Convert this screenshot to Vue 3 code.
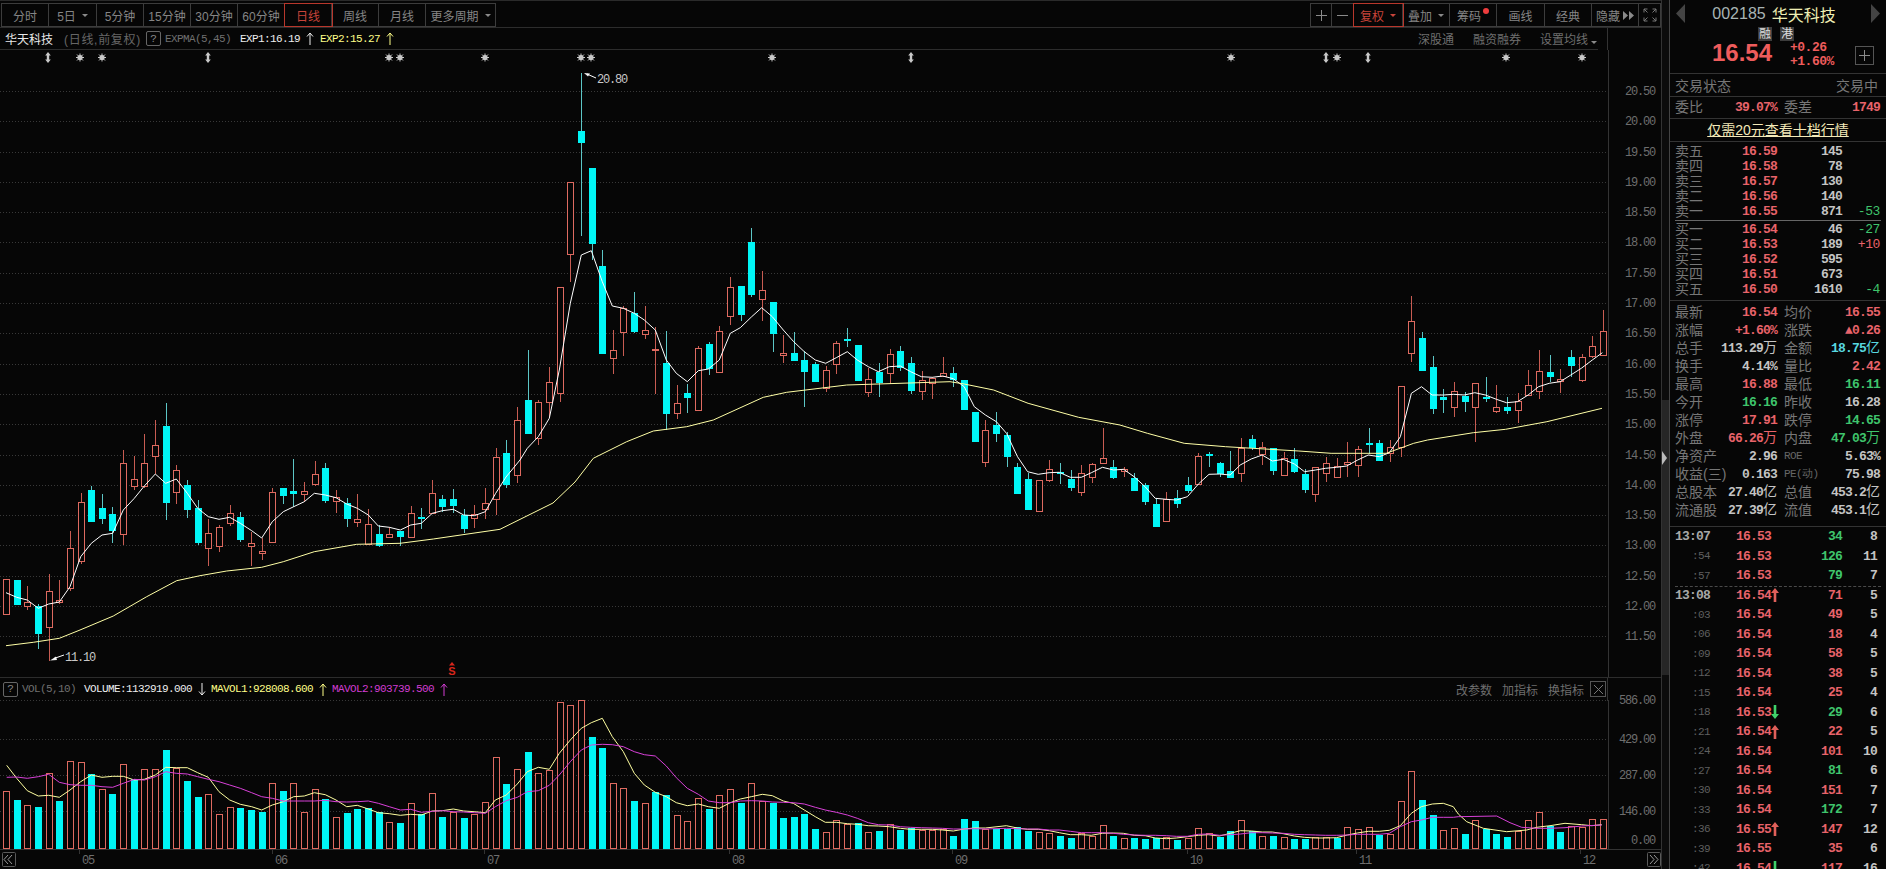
<script setup>
import { computed } from 'vue'

const leftTabs = [
  { t: '分时', w: 47 }, { t: '5日', w: 48, caret: true }, { t: '5分钟', w: 47 }, { t: '15分钟', w: 47 },
  { t: '30分钟', w: 47 }, { t: '60分钟', w: 47 }, { t: '日线', w: 47, on: true }, { t: '周线', w: 47 },
  { t: '月线', w: 47 }, { t: '更多周期', w: 70, caret: true }
]
const rightTabs = [
  { t: '复权', w: 49, caret: true, on: true }, { t: '叠加', w: 47, caret: true }, { t: '筹码', w: 47, dot: true },
  { t: '画线', w: 48 }, { t: '经典', w: 47 }
]

// candle: type, body top, body bottom, high, low - read off the crops, y = offset + v / 3
const c0 = [['r',538,641,538,645],['c',540,612,540,614],['r',607,617,558,630],['c',618,698,612,747],['r',574,680,522,782],['r',601,607,540,612],['r',445,563,392,572],['r',307,484,280,492],['c',270,363,258,365],['c',324,353,282,372],['c',342,390,322,430],['r',190,403,150,435],['r',238,258,168,270],['r',190,257,103,265],['r',136,167,60,222],['c',78,305,10,360],['r',211,275,195,312],['c',255,326,240,354],['c',325,425,300,436],['r',400,443,358,498],['r',380,437,376,455],['r',340,368,316,377],['c',351,417,337,425],['r',430,437,395,497],['r',454,458,414,480],['r',277,425,265,425],['c',265,285,263,312],['c',273,278,178,320],['r',274,281,247,306],['r',223,252,183,257],['c',205,299,190,308],['r',290,302,270,340],['c',308,353,295,380],['r',358,365,283,380],['r',373,432,327,435],['c',403,435,375,440],['r',401,410,382,415],['c',394,408,392,437],['r',340,410,318,415],['c',351,353,325,387],['r',280,340,240,342],['c',298,318,286,335],['c',298,315,268,338],['c',345,383,326,398],['r',341,355,316,385],['r',310,327,264,357],['r',172,297,145,345]]
const c1 = [['c',1180,1272,1140,1284],['r',1080,1245,1040,1270],['c',1020,1118,870,1120],['r',1027,1133,1020,1155],['r',965,1027,920,1075],['r',680,1000,680,1027],['r',365,583,365,665],['c',213,245,40,527],['c',325,548,325,600],['c',618,878,570,880],['r',871,893,810,942],['r',743,815,738,888],['c',760,812,697,820],['r',811,821,738,837],['r',866,869,800,1002],['c',908,1058,813,1110],['r',1030,1058,975,1077],['c',1000,1010,972,1058],['r',865,1050,857,1052],['c',853,923,847,945],['r',813,936,798,938],['r',680,767,652,795],['c',678,762,678,783],['c',546,702,503,710],['r',691,718,633,782],['c',727,818,727,876],['r',880,884,825,908],['c',880,899,817,900],['c',901,933,873,1040],['c',912,963,905,965],['r',931,983,918,995],['r',850,911,843,942],['c',837,839,805,860],['c',856,960,855,963],['r',958,995,925,1010],['c',935,965,910,1012],['r',883,940,868,972],['c',873,920,858,932],['c',910,990,892,1003],['r',960,992,933,1020],['r',955,970,950,1017],['r',940,947,890,950]]
const c2 = [['c',280,296,260,320],['c',300,387,300,390],['c',396,484,396,486],['r',451,545,420,560],['c',436,459,397,485],['c',465,528,455,560],['c',561,638,550,640],['c',597,687,580,690],['r',600,693,600,697],['r',568,599,541,605],['c',575,578,549,612],['c',597,622,571,632],['r',578,635,555,648],['r',553,590,550,608],['r',533,550,445,552],['c',561,592,540,597],['r',568,572,562,590],['c',594,630,580,632],['c',614,662,610,675],['c',672,738,655,742],['r',657,722,636,725],['c',655,668,630,684],['c',615,630,590,638],['r',529,611,520,614],['c',522,525,517,562],['c',549,580,545,590],['c',572,590,512,592],['r',504,580,475,606],['c',477,501,466,510],['r',500,522,487,556],['c',505,570,503,584],['r',534,584,516,586],['c',538,573,505,580],['c',583,627,566,640],['r',562,643,560,665],['r',550,580,530,606],['r',557,592,535,595],['r',546,552,486,590],['r',508,554,498,590],['c',489,491,445,523],['c',489,540,480,542],['r',502,519,480,545],['r',319,500,317,530],['r',124,218,48,245],['c',175,269,155,270],['c',262,383,228,402],['c',350,356,327,398],['r',334,382,307,410],['c',348,362,335,396],['r',310,380,310,485],['c',350,352,290,366],['r',382,393,315,398],['c',381,389,350,402],['r',362,391,340,428],['r',314,344,270,346],['r',274,332,210,356],['c',277,287,225,306],['r',298,302,267,338],['c',232,255,210,290],['r',232,300,222,305],['r',199,229,168,235],['r',154,224,90,226]]

const cx = (i) => Math.round(6 + 10.646 * i)
const toCandle = (off) => (r) => ({ up: r[0] === 'r', top: off + r[1] / 3, bot: off + r[2] / 3, hi: off + r[3] / 3, lo: off + r[4] / 3 })
const candles = computed(() =>
  [...c0.map(toCandle(400)), ...c1.map(toCandle(60)), ...c2.map(toCandle(280))].map((c, i) => ({
    ...c,
    x: cx(i),
    top: Math.round(c.top),
    bot: Math.max(Math.round(c.bot), Math.round(c.top) + 1),
    hi: Math.round(c.hi),
    lo: Math.round(c.lo)
  }))
)

const volSeg = (types, tops, off) => tops.map((v, i) => ({ up: types[i] === 'r', y: Math.round(off + v / 3) }))
const vols = [
  ...volSeg('rcrcrcrrcrcrcrrcrccrrrcccrcrrrcrccccrcrcrcrcrrr', [394,420,436,441,340,423,304,307,342,388,402,313,358,328,328,270,323,363,411,403,463,442,444,450,456,370,393,370,457,388,418,472,459,447,445,457,487,489,430,463,400,471,455,474,463,427,292], 660),
  ...volSeg('crcrrrrrccrrcrccrrrcrrcrrcccccrrrcrcrccrrrcccrc', [312,268,216,280,271,67,76,61,171,204,310,325,363,370,336,345,406,424,355,387,346,328,368,310,362,368,414,411,402,447,457,421,431,430,457,453,433,450,445,450,450,446,468,417,423,447,447], 680),
  ...volSeg('cccrrccrrrcrcccrcrrrccrcrcrccrrcrrrcrrrccrrcrcc', [446,440,453,457,460,468,474,460,468,436,468,475,473,476,475,470,480,474,445,458,471,454,421,452,469,468,472,477,477,470,472,475,440,448,440,465,463,364,274,360,405,451,445,462,421,448,462], 680),
  ...volSeg('crrrccrrrr', [530,513,481,457,497,515,497,500,478,478], 660)
].map((v, i) => ({ ...v, x: cx(i) }))

const pts = (list, x0, y0, sx = 3) => list.map(([x, y]) => `${(x0 + x / sx).toFixed(1)},${(y0 + y / 3).toFixed(1)}`).join(' ')

const ma5 = [
  pts([[18,578],[50,592],[82,600],[115,625],[146,612],[178,606],[210,560],[242,470],[274,430],[306,405],[338,400],[370,330],[403,295],[433,258],[466,222],[497,250],[529,237],[562,280],[593,325],[625,350],[657,358],[689,352],[721,370],[755,392],[785,414],[817,365],[850,335],[881,320],[913,305],[943,280],[976,285],[1008,293],[1040,312],[1072,325],[1105,345],[1135,378],[1168,382],[1201,390],[1232,375],[1264,370],[1297,340],[1327,332],[1360,328],[1391,345],[1423,347],[1456,335],[1487,280]], 0, 400),
  pts([[18,1251],[60,1200],[82,1165],[115,1130],[148,1075],[178,930],[211,730],[244,585],[274,572],[307,665],[337,738],[370,745],[403,760],[433,780],[466,810],[499,900],[529,940],[562,965],[595,932],[625,927],[658,900],[691,820],[721,803],[755,770],[785,743],[817,770],[850,810],[881,845],[913,875],[946,900],[977,910],[1009,893],[1042,875],[1072,900],[1105,920],[1135,935],[1168,920],[1201,918],[1232,935],[1264,950],[1297,952],[1328,948]], 500, 60),
  pts([[7,296],[31,320],[53,380],[77,405],[101,425],[123,460],[147,530],[169,575],[192,583],[216,578],[238,577],[262,592],[286,592],[308,578],[332,562],[356,570],[378,568],[401,590],[425,620],[447,655],[471,658],[493,660],[517,650],[541,612],[564,583],[587,582],[610,585],[632,555],[656,537],[680,525],[702,543],[726,538],[750,552],[772,575],[796,570],[818,565],[842,562],[864,558],[888,540],[911,525],[935,530],[957,518],[981,470],[1005,340],[1027,320],[1050,345],[1075,345],[1097,343],[1120,345],[1143,338],[1166,345],[1190,358],[1212,368],[1236,365],[1259,345],[1282,320],[1305,310],[1329,305],[1352,285],[1375,265],[1399,240],[1421,218]], 950, 280, 2.178)
].join(' ')

const ma45 = [
  pts([[18,737],[100,727],[178,715],[240,690],[340,648],[440,590],[530,542],[600,527],[680,513],[785,502],[850,485],[943,455],[1070,433],[1200,430],[1300,417],[1500,388]], 0, 400),
  pts([[159,1329],[225,1266],[280,1195],[380,1145],[460,1113],[560,1100],[640,1080],[790,1012],[860,997],[1040,975],[1200,970],[1350,965]], 500, 60),
  pts([[0,305],[31,312],[95,330],[170,370],[280,412],[370,435],[430,460],[510,490],[600,500],[760,513],[830,520],[950,520],[1010,490],[1040,480],[1140,458],[1210,448],[1300,425],[1420,385]], 950, 280, 2.178)
].join(' ')

const volYellow = [
  pts([[20,316],[50,355],[82,392],[115,408],[146,406],[178,412],[210,390],[242,365],[274,345],[306,352],[338,349],[370,349],[403,360],[433,358],[466,345],[497,322],[529,323],[562,323],[593,338],[625,352],[657,395],[689,420],[721,433],[755,440],[785,450],[817,435],[850,425],[881,410],[913,408],[943,398],[976,404],[1008,420],[1040,440],[1072,436],[1105,447],[1135,458],[1168,461],[1201,466],[1232,463],[1264,465],[1297,453],[1327,452],[1360,447],[1391,453],[1423,455],[1456,458]], 0, 660),
  pts([[16,360],[49,345],[82,312],[112,275],[145,262],[178,268],[208,220],[241,180],[274,145],[304,128],[337,115],[367,170],[400,215],[433,280],[463,315],[496,337],[529,350],[559,368],[592,377],[625,372],[655,380],[688,385],[721,368],[751,357],[784,350],[817,343],[847,347],[880,363],[910,370],[943,390],[976,410],[1006,427],[1039,427],[1072,431],[1102,433],[1135,437],[1165,438],[1198,440],[1231,445],[1261,448],[1294,448],[1327,448],[1357,450],[1390,453],[1423,447],[1453,444],[1486,444]], 490, 680),
  pts([[19,437],[52,444],[82,448],[115,448],[148,452],[178,458],[211,464],[244,464],[274,466],[307,460],[340,459],[370,460],[403,466],[436,467],[466,474],[499,476],[529,474],[562,470],[595,466],[625,464],[658,468],[691,460],[721,452],[754,453],[787,456],[817,456],[850,461],[883,468],[913,472],[946,474],[976,474],[1009,473],[1042,465],[1072,459],[1105,454],[1138,454],[1168,451],[1201,437],[1234,400],[1264,380],[1297,372],[1330,370],[1360,380]], 1000, 680),
  pts([[775,462],[800,485],[850,505],[920,515],[980,510],[1010,502],[1050,497],[1095,490],[1145,494],[1175,497],[1205,494]], 1200, 660)
].join(' ')

const volMagenta = [
  pts([[20,352],[50,351],[82,355],[115,350],[146,343],[178,367],[210,374],[242,376],[274,376],[306,380],[338,382],[370,370],[403,358],[433,360],[466,350],[497,335],[529,340],[562,342],[593,350],[625,358],[657,365],[689,375],[721,385],[755,398],[785,410],[817,415],[850,423],[881,423],[913,423],[943,423],[976,421],[1008,425],[1040,426],[1072,425],[1105,423],[1135,430],[1168,440],[1201,450],[1232,448],[1264,457],[1297,454],[1327,452],[1360,455],[1391,456],[1423,458],[1456,460]], 0, 660),
  pts([[16,380],[49,362],[82,352],[112,335],[145,332],[178,316],[208,285],[241,245],[274,210],[304,195],[337,193],[367,194],[400,200],[433,215],[463,224],[496,228],[529,258],[559,293],[592,325],[625,343],[655,363],[688,368],[721,368],[751,363],[784,362],[817,363],[847,366],[880,367],[910,368],[943,372],[976,382],[1006,390],[1039,397],[1072,405],[1102,415],[1135,428],[1165,434],[1198,435],[1231,440],[1261,442],[1294,443],[1327,444],[1357,445],[1390,447],[1423,447],[1453,446],[1486,447]], 490, 680),
  pts([[19,445],[52,446],[82,447],[115,447],[148,450],[178,450],[211,454],[244,458],[274,458],[307,458],[340,460],[370,463],[403,465],[436,466],[466,466],[499,467],[529,469],[562,469],[595,463],[625,462],[658,466],[691,464],[721,462],[754,458],[787,458],[817,459],[850,460],[883,463],[913,464],[946,465],[976,466],[1009,466],[1042,465],[1072,463],[1105,463],[1138,463],[1168,460],[1201,440],[1234,425],[1264,420],[1297,412],[1330,412],[1360,412]], 1000, 680),
  pts([[775,470],[890,468],[930,488],[965,502],[1010,505],[1050,505],[1095,503],[1145,498],[1205,495]], 1200, 660)
].join(' ')

const priceTicks = []
for (let p = 20.5; p >= 11.5; p -= 0.5) {
  priceTicks.push({ label: p.toFixed(2), y: Math.round(303 + (17 - p) * 60.6) })
}
const volTicks = [{ label: '586.00', y: 700 }, { label: '429.00', y: 739 }, { label: '287.00', y: 775 }, { label: '146.00', y: 811 }]
const months = [['05', 88], ['06', 281], ['07', 493], ['08', 738], ['09', 961], ['10', 1196], ['11', 1365], ['12', 1589]]

const stars = [80, 102, 389, 400, 485, 581, 591, 772, 1231, 1337, 1506, 1582]
const shifts = [48, 208, 911, 1326, 1368]
const rays = 'M0,-4V4M-4,0H4M-3,-3L3,3M3,-3L-3,3'

const sell = [['卖五', '16.59', '145', ''], ['卖四', '16.58', '78', ''], ['卖三', '16.57', '130', ''], ['卖二', '16.56', '140', ''], ['卖一', '16.55', '871', '-53']]
const buy = [['买一', '16.54', '46', '-27'], ['买二', '16.53', '189', '+10'], ['买三', '16.52', '595', ''], ['买四', '16.51', '673', ''], ['买五', '16.50', '1610', '-4']]

const stats = [
  [{ l: '最新', v: '16.54', c: 'red' }, { l: '均价', v: '16.55', c: 'red' }],
  [{ l: '涨幅', v: '+1.60%', c: 'red' }, { l: '涨跌', v: '▲0.26', c: 'red' }],
  [{ l: '总手', v: '113.29', u: '万', c: 'gray' }, { l: '金额', v: '18.75', u: '亿', c: 'cyan' }],
  [{ l: '换手', v: '4.14%', c: 'gray' }, { l: '量比', v: '2.42', c: 'red' }],
  [{ l: '最高', v: '16.88', c: 'red' }, { l: '最低', v: '16.11', c: 'green' }],
  [{ l: '今开', v: '16.16', c: 'green' }, { l: '昨收', v: '16.28', c: 'gray' }],
  [{ l: '涨停', v: '17.91', c: 'red' }, { l: '跌停', v: '14.65', c: 'green' }],
  [{ l: '外盘', v: '66.26', u: '万', c: 'red' }, { l: '内盘', v: '47.03', u: '万', c: 'green' }],
  [{ l: '净资产', v: '2.96', c: 'gray' }, { l: 'ROE', v: '5.63%', c: 'gray', lat: true }],
  [{ l: '收益(三)', v: '0.163', c: 'gray' }, { l: 'PE(动)', v: '75.98', c: 'gray', lat: true }],
  [{ l: '总股本', v: '27.40', u: '亿', c: 'gray' }, { l: '总值', v: '453.2', u: '亿', c: 'gray' }],
  [{ l: '流通股', v: '27.39', u: '亿', c: 'gray' }, { l: '流值', v: '453.1', u: '亿', c: 'gray' }]
]

const trades = [
  ['13:07', '16.53', '', '34', 'green', '8'], [':54', '16.53', '', '126', 'green', '11'], [':57', '16.53', '', '79', 'green', '7'],
  ['13:08', '16.54', 'up', '71', 'red', '5'], [':03', '16.54', '', '49', 'red', '5'], [':06', '16.54', '', '18', 'red', '4'],
  [':09', '16.54', '', '58', 'red', '5'], [':12', '16.54', '', '38', 'red', '5'], [':15', '16.54', '', '25', 'red', '4'],
  [':18', '16.53', 'down', '29', 'green', '6'], [':21', '16.54', 'up', '22', 'red', '5'], [':24', '16.54', '', '101', 'red', '10'],
  [':27', '16.54', '', '81', 'green', '6'], [':30', '16.54', '', '151', 'red', '7'], [':33', '16.54', '', '172', 'green', '7'],
  [':36', '16.55', 'up', '147', 'red', '12'], [':39', '16.55', '', '35', 'red', '6'], [':42', '16.54', 'down', '117', 'red', '16']
]
</script>

<template>
  <div class="app">
    <div class="main">
      <div class="toolbar">
        <div class="group">
          <div v-for="b in leftTabs" :key="b.t" class="tab" :class="{ on: b.on }" :style="{ width: b.w + 'px' }">
            {{ b.t }}<i v-if="b.caret" class="caret"></i>
          </div>
        </div>
        <div class="group right">
          <div class="tab" style="width: 21px"><svg width="13" height="13" class="ico"><path d="M6.5 1V12M1 6.5H12" /></svg></div>
          <div class="tab" style="width: 22px"><svg width="13" height="13" class="ico"><path d="M1 6.5H12" /></svg></div>
          <div v-for="b in rightTabs" :key="b.t" class="tab" :class="{ on: b.on }" :style="{ width: b.w + 'px' }">
            {{ b.t }}<i v-if="b.caret" class="caret"></i><i v-if="b.dot" class="dot"></i>
          </div>
          <div class="tab" style="width: 47px">隐藏<svg width="11" height="9" class="tri"><path d="M0 0L5 4.5L0 9ZM6 0L11 4.5L6 9Z" /></svg></div>
          <div class="tab last" style="width: 22px">
            <svg width="14" height="14" class="ico thin"><path d="M1 4.5V1H4.5M1 1L4.5 4.5M9.5 1H13V4.5M13 1L9.5 4.5M1 9.5V13H4.5M1 13L4.5 9.5M13 9.5V13H9.5M13 13L9.5 9.5" /></svg>
          </div>
        </div>
      </div>

      <div class="info">
        <div class="info-main">
          <span class="name">华天科技</span>
          <span class="period">(日线,前复权)</span>
          <span class="qbox">?</span>
          <span class="mono dim exp">EXPMA(5,45)</span>
          <span class="mono white ml9">EXP1:16.19</span>
          <svg width="8" height="13" class="arr wh"><path d="M4 13V1M1 4.5L4 1L7 4.5" /></svg>
          <span class="mono yel ml6">EXP2:15.27</span>
          <svg width="8" height="13" class="arr ye"><path d="M4 13V1M1 4.5L4 1L7 4.5" /></svg>
          <span class="links">
            <span>深股通</span><span>融资融券</span><span>设置均线<i class="caret"></i></span>
          </span>
        </div>
        <div class="axis-cell"></div>
      </div>

      <svg class="chart" width="1661" height="627" viewBox="0 50 1661 627">
        <line v-for="t in priceTicks" :key="t.label" class="grid" x1="0" x2="1606" :y1="t.y + 0.5" :y2="t.y + 0.5" />
        <line class="axis" x1="1608.5" x2="1608.5" y1="50" y2="677" />
        <text v-for="t in priceTicks" :key="'l' + t.label" class="tick" x="1655" :y="t.y + 4" text-anchor="end">{{ t.label }}</text>

        <g v-for="x in stars" :key="'s' + x" :transform="`translate(${x},57.5)`">
          <path class="ray" :d="rays" /><circle r="2.6" fill="#c8c8c8" />
        </g>
        <path v-for="x in shifts" :key="'h' + x" :transform="`translate(${x},57.5)`" class="shift" d="M0,-5.5L2.8,-2H1.2V2H2.8L0,5.5L-2.8,2H-1.2V-2H-2.8Z" />

        <g v-for="(c, i) in candles" :key="i">
          <template v-if="c.up">
            <line class="wick-r" :x1="c.x + 0.5" :x2="c.x + 0.5" :y1="c.hi" :y2="c.top" />
            <line class="wick-r" :x1="c.x + 0.5" :x2="c.x + 0.5" :y1="c.bot" :y2="c.lo" />
            <rect class="body-r" :x="c.x - 2.5" :y="c.top + 0.5" width="6" :height="c.bot - c.top" />
          </template>
          <template v-else>
            <line class="wick-c" :x1="c.x + 0.5" :x2="c.x + 0.5" :y1="c.hi" :y2="c.lo" />
            <rect class="body-c" :x="c.x - 3" :y="c.top" width="7" :height="c.bot - c.top + 1" />
          </template>
        </g>

        <polyline class="line ma5" :points="ma5" />
        <polyline class="line ma45" :points="ma45" />

        <path class="mark" d="M584 73L590 73.5L588 76.5Z" />
        <polyline class="line ma5" points="587,74 596,78" />
        <text class="note" x="597" y="83">20.80</text>
        <path class="mark" d="M50 660.5L56 656.5L57 660Z" />
        <polyline class="line ma5" points="54,658.5 64,655" />
        <text class="note" x="65" y="661">11.10</text>

        <path d="M452 662L455 665.5H449Z" fill="#d8261c" />
        <text class="smark" x="452" y="675" text-anchor="middle">S</text>
      </svg>

      <div class="vol-head">
        <span class="qbox vq">?</span>
        <span class="mono dim">VOL(5,10)</span>
        <span class="mono white ml8">VOLUME:1132919.000</span>
        <svg width="8" height="13" class="arr wh"><path d="M4 0V12M1 8.5L4 12L7 8.5" /></svg>
        <span class="mono yel ml5">MAVOL1:928008.600</span>
        <svg width="8" height="13" class="arr ye"><path d="M4 13V1M1 4.5L4 1L7 4.5" /></svg>
        <span class="mono mag ml5">MAVOL2:903739.500</span>
        <svg width="8" height="13" class="arr mg"><path d="M4 13V1M1 4.5L4 1L7 4.5" /></svg>
        <span class="vol-links"><span>改参数</span><span>加指标</span><span>换指标</span></span>
        <span class="xbox"><svg width="9" height="9" class="ico thin"><path d="M0 0L9 9M9 0L0 9" /></svg></span>
        <div class="axis-cell short"></div>
      </div>

      <svg class="vol" width="1661" height="150" viewBox="0 700 1661 150">
        <line v-for="t in volTicks" :key="t.label" class="grid" x1="0" x2="1606" :y1="t.y + 0.5" :y2="t.y + 0.5" />
        <line class="axis" x1="1608.5" x2="1608.5" y1="700" y2="850" />
        <line class="axis" x1="0" x2="1661" y1="849.5" y2="849.5" />
        <text v-for="t in volTicks" :key="'l' + t.label" class="tick" x="1655" :y="t.y + 4" text-anchor="end">{{ t.label }}</text>
        <text class="tick" x="1655" y="844" text-anchor="end">0.00</text>
        <g v-for="(v, i) in vols" :key="i">
          <rect v-if="v.up" class="body-r" :x="v.x - 2.5" :y="v.y + 0.5" width="6" :height="848 - v.y" />
          <rect v-else class="body-c" :x="v.x - 3" :y="v.y" width="7" :height="849 - v.y" />
        </g>
        <polyline class="line vy" :points="volYellow" />
        <polyline class="line vm" :points="volMagenta" />
      </svg>

      <svg class="dates" width="1661" height="19" viewBox="0 850 1661 19">
        <g v-for="m in months" :key="m[0]">
          <line class="axis" :x1="m[1] - 8.5" :x2="m[1] - 8.5" y1="850" y2="854" />
          <text class="tick" :x="m[1]" y="864" text-anchor="middle">{{ m[0] }}</text>
        </g>
        <rect class="navbox" x="2.5" y="852.5" width="13" height="14" rx="1" />
        <path class="nav" d="M8 855L4 859.5L8 864M12 855L8 859.5L12 864" />
        <rect class="navbox" x="1647.5" y="852.5" width="13" height="14" rx="1" />
        <path class="nav" d="M1650 855L1654 859.5L1650 864M1654 855L1658 859.5L1654 864" />
      </svg>
    </div>

    <div class="strip">
      <div class="thumb"><i class="grip"></i></div>
    </div>

    <div class="panel">
      <div class="quote">
        <div class="title">
          <svg width="9" height="19" class="nav-arrow"><path d="M9 0V19L0 9.5Z" /></svg>
          <span class="code">002185</span><span class="stock">华天科技</span>
          <svg width="9" height="19" class="nav-arrow"><path d="M0 0V19L9 9.5Z" /></svg>
        </div>
        <div class="badges"><span>融</span><span>港</span></div>
        <div class="now">
          <span class="big">16.54</span>
          <span class="chg"><span>+0.26</span><span>+1.60%</span></span>
          <span class="plus"><svg width="13" height="13" class="ico"><path d="M6.5 1V12M1 6.5H12" /></svg></span>
        </div>
      </div>
      <div class="state"><span>交易状态</span><span>交易中</span></div>
      <div class="ratio">
        <span class="cell"><span class="up2">委比</span><b class="num red">39.07%</b></span>
        <span class="cell"><span class="up2">委差</span><b class="num red">1749</b></span>
      </div>
      <div class="banner"><u>仅需20元查看十档行情</u></div>

      <div class="book sell">
        <div v-for="r in sell" :key="r[0]" class="book-row">
          <span class="lab">{{ r[0] }}</span><b class="num red">{{ r[1] }}</b>
          <b class="num gray ra">{{ r[2] }}</b><span class="delta green">{{ r[3] }}</span>
        </div>
      </div>
      <div class="book buy">
        <div v-for="r in buy" :key="r[0]" class="book-row">
          <span class="lab">{{ r[0] }}</span><b class="num red">{{ r[1] }}</b>
          <b class="num gray ra">{{ r[2] }}</b>
          <span class="delta" :class="r[3][0] === '+' ? 'red' : 'green'">{{ r[3] }}</span>
        </div>
      </div>

      <div class="stats">
        <div v-for="(row, i) in stats" :key="i" class="stat-row">
          <span v-for="s in row" :key="s.l" class="cell">
            <span :class="{ lat: s.lat }">{{ s.l }}</span>
            <span :class="s.c"><b class="num">{{ s.v }}</b><span v-if="s.u">{{ s.u }}</span></span>
          </span>
        </div>
      </div>

      <div class="trades">
        <div v-for="(t, i) in trades" :key="i" class="trade" :class="{ split: i === 3 }">
          <span class="time" :class="{ sec: t[0][0] === ':' }">{{ t[0] }}</span>
          <b class="num red px">{{ t[1] }}</b>
          <span class="tick-arrow">
            <svg v-if="t[2] === 'up'" width="8" height="14"><path d="M4 0L8 5H5.3V14H2.7V5H0Z" fill="#e0605a" /></svg>
            <svg v-if="t[2] === 'down'" width="8" height="14"><path d="M4 14L8 9H5.3V0H2.7V9H0Z" fill="#3fd26a" /></svg>
          </span>
          <b class="num ra" :class="t[4]">{{ t[3] }}</b>
          <b class="num gray ra">{{ t[5] }}</b>
        </div>
      </div>
    </div>
  </div>
</template>

<style>
body { background: #060606; overflow: hidden; }
</style>

<style scoped>
.app {
  display: flex;
  width: 1886px;
  height: 869px;
  overflow: hidden;
  background: #060606;
  color: #777;
  font-family: "Liberation Sans", "Noto Sans CJK SC", sans-serif;
  font-size: 12px;
}
.main { width: 1662px; flex: none; border-right: 1px solid #333; box-sizing: border-box; }
.main svg { display: block; }
.main svg.vol { overflow: visible; }

.toolbar { display: flex; height: 28px; box-sizing: border-box; padding: 2px 0 0 1px; border-top: 1px solid #2a2a2a; border-bottom: 1px solid #2c2c2c; }
.group { display: flex; height: 24px; box-sizing: border-box; border: 1px solid #3c3c3c; border-right: 0; }
.group.right { margin-left: auto; }
.tab { display: flex; align-items: center; justify-content: center; gap: 3px; height: 22px; box-sizing: border-box; border-right: 1px solid #3c3c3c; color: #858585; }
.tab.on { outline: 1px solid #b8372c; outline-offset: 0; color: #c8443a; z-index: 1; }
.caret { display: inline-block; width: 0; height: 0; margin-left: 3px; border: 3px solid transparent; border-top: 3px solid #8a8a8a; border-bottom: 0; }
.tab.on .caret { border-top-color: #c8443a; }
.dot { width: 6px; height: 6px; margin: -9px 0 0 -1px; border-radius: 50%; background: #ef3d3d; }
.ico { fill: none; stroke: #8a8a8a; stroke-width: 1; }
.ico.thin { stroke: #777; }
.tri { fill: #8a8a8a; }

.info { display: flex; height: 22px; }
.info-main { display: flex; align-items: center; flex: 1; height: 22px; box-sizing: border-box; margin-right: 9px; padding-left: 5px; border-bottom: 1px solid #2c2c2c; }
.axis-cell { width: 53px; flex: none; border-left: 1px solid #333; box-sizing: content-box; }
.axis-cell.short { height: 23px; margin-left: 1px; }
.name { width: 59px; color: #e8e8e8; }
.period { width: 82px; color: #666; letter-spacing: 0.7px; white-space: nowrap; }
.qbox { display: flex; align-items: center; justify-content: center; width: 13px; height: 13px; border: 1px solid #666; border-radius: 2px; color: #888; font-family: "Liberation Mono", monospace; font-size: 11px; }
.mono { font-family: "Liberation Mono", monospace; font-size: 11px; letter-spacing: -0.6px; white-space: nowrap; }
.dim { color: #707070; }
.white { color: #eee; }
.yel { color: #ffff88; }
.mag { color: #d23cd2; }
.exp { margin-left: 4px; }
.ml9 { margin-left: 9px; }
.ml8 { margin-left: 8px; }
.ml6 { margin-left: 6px; }
.ml5 { margin-left: 5px; }
.arr { margin-left: 6px; fill: none; stroke-width: 1; }
.arr.wh { stroke: #eee; }
.arr.ye { stroke: #ffff88; }
.arr.mg { stroke: #d23cd2; }
.links { display: flex; gap: 19px; margin-left: auto; margin-right: 1px; color: #6e6e6e; }

.grid { stroke: #383838; stroke-width: 1; stroke-dasharray: 1 2; }
.axis { stroke: #333; stroke-width: 1; }
.tick { fill: #6e6e6e; font-family: "Liberation Mono", monospace; font-size: 12px; letter-spacing: -1.2px; }
.note { fill: #c8c8c8; font-family: "Liberation Mono", monospace; font-size: 12px; letter-spacing: -1.2px; }
.mark { fill: #eee; }
.smark { fill: #d8261c; font-family: "Liberation Sans", sans-serif; font-size: 11px; font-weight: 700; }
.ray { stroke: #c8c8c8; stroke-width: 1; fill: none; }
.shift { fill: #c8c8c8; }
.wick-r { stroke: #c85c52; stroke-width: 1; }
.wick-c { stroke: #5cc6c6; stroke-width: 1; }
.body-r { fill: #060606; stroke: #de6a60; stroke-width: 1; }
.body-c { fill: #00f6f6; }
.line { fill: none; stroke-width: 1; stroke-linejoin: round; shape-rendering: geometricPrecision; }
.ma5 { stroke: #ffffff; }
.ma45 { stroke: #ffffa6; }
.vy { stroke: #ffffa0; }
.vm { stroke: #d840d8; }
.navbox { fill: none; stroke: #5a5a5a; }
.nav { fill: none; stroke: #999; stroke-width: 1; }

.vol-head { display: flex; align-items: center; height: 23px; box-sizing: border-box; border-top: 1px solid #2c2c2c; padding-left: 3px; }
.vq { margin-right: 4px; }
.vol-links { display: flex; gap: 10px; margin-left: auto; color: #6e6e6e; }
.xbox { display: flex; align-items: center; justify-content: center; width: 14px; height: 14px; margin-left: 6px; border: 1px solid #555; }

.strip { display: flex; flex-direction: column; width: 7px; flex: none; padding-top: 400px; box-sizing: border-box; background: #0c0c0c; }
.thumb { height: 275px; background: #262626; padding-top: 51px; box-sizing: border-box; }
.grip { display: block; width: 0; height: 0; border: 7px solid transparent; border-left: 5px solid #bbb; border-right: 0; }

.panel { width: 217px; flex: none; box-sizing: border-box; border-left: 1px solid #444; font-size: 14px; color: #777; }
.quote { height: 74px; box-sizing: border-box; border-bottom: 1px solid #333; }
.title { display: flex; align-items: center; height: 27px; padding: 0 6px; font-size: 16px; }
.nav-arrow { fill: #444; }
.code { margin-left: auto; color: #a8b4b4; }
.stock { margin: 0 auto 0 6px; color: #eeeeb4; padding-right: 8px; }
.badges { display: flex; justify-content: center; gap: 8px; height: 15px; padding-right: 4px; }
.badges span { width: 14px; height: 14px; background: #3c3c3c; color: #ddd; font-size: 12px; line-height: 14px; text-align: center; }
.now { display: flex; align-items: center; height: 28px; padding-left: 42px; margin-top: -3px; color: #ee5c5c; }
.big { width: 78px; font-size: 24px; font-weight: 700; }
.chg { display: flex; flex-direction: column; width: 65px; margin-top: 4px; font-family: "Liberation Mono", monospace; font-size: 13px; font-weight: 700; letter-spacing: -0.5px; line-height: 14px; }
.plus { display: flex; align-items: center; justify-content: center; width: 17px; height: 17px; margin-top: 4px; border: 1px solid #555; }

.state { display: flex; justify-content: space-between; align-items: center; height: 23px; box-sizing: border-box; padding: 0 8px 0 5px; border-bottom: 1px solid #333; }
.ratio { display: grid; grid-template-columns: 102px 96px; column-gap: 7px; align-items: center; height: 22px; box-sizing: border-box; padding-left: 5px; border-bottom: 1px solid #333; }
.up2 { margin-top: -3px; }
.cell { display: flex; justify-content: space-between; align-items: center; }
.banner { height: 23px; box-sizing: border-box; border-bottom: 1px solid #333; color: #f3e9b8; font-size: 14px; line-height: 22px; text-align: center; }
.num { font-family: "Liberation Mono", monospace; font-size: 13px; font-weight: 700; letter-spacing: -0.8px; }
.red { color: #e8636a; }
.green { color: #3fc46c; }
.cyan { color: #58d8e0; }
.gray { color: #c4c4c4; }
.ra { text-align: right; }

.book { margin: 0 5px; }
.book.sell { padding-top: 2px; height: 79px; box-sizing: border-box; border-bottom: 1px solid #666; }
.book.buy { padding-top: 1px; height: 80px; box-sizing: border-box; margin: 0; padding-left: 5px; padding-right: 5px; border-bottom: 1px solid #333; }
.book-row { display: grid; grid-template-columns: 67px 35px 65px 38px; height: 15px; line-height: 15px; align-items: center; }
.lab { font-size: 14px; line-height: 15px; }
.delta { font-size: 13px; text-align: right; font-family: "Liberation Mono", monospace; letter-spacing: -0.4px; }

.stats { height: 226px; box-sizing: border-box; padding: 1px 0 0 5px; border-bottom: 1px solid #333; }
.stat-row { display: grid; grid-template-columns: 102px 96px; column-gap: 7px; height: 18px; line-height: 18px; }
.lat { font-family: "Liberation Mono", monospace; font-size: 11px; letter-spacing: -0.6px; color: #666; }

.trades { padding-left: 5px; }
.trade { display: grid; grid-template-columns: 35px 26px 35px 10px 61px 35px; height: 19.5px; align-items: center; box-sizing: border-box; }
.trade .num:nth-of-type(2) { grid-column: 5; }
.trade.split { position: relative; }
.trade.split::before { content: ""; position: absolute; left: 0; right: 5px; top: 0; border-top: 1px dashed #4a4a4a; }
.time { grid-column: 1; text-align: right; font-family: "Liberation Mono", monospace; font-size: 13px; font-weight: 700; letter-spacing: -0.8px; color: #a8a8a8; }
.time.sec { font-weight: 400; font-size: 11px; letter-spacing: -0.6px; color: #5f5f5f; }
.px { grid-column: 3; }
.tick-arrow { display: flex; align-items: center; grid-column: 4; height: 14px; }
</style>
